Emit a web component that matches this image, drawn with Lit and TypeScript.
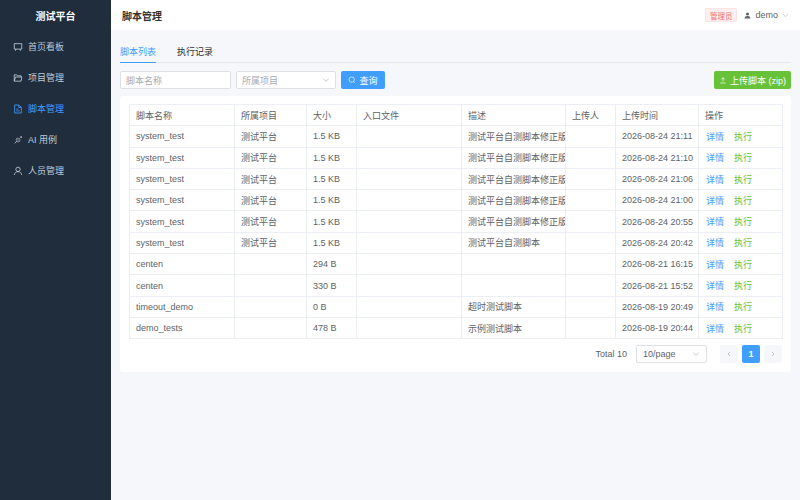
import { LitElement, css, html, svg } from 'lit'
import { customElement } from 'lit/decorators.js'

const navItems = [
	{ label: '首页看板', icon: svg`<path d="M1.5 2h9v6.5h-9z M3.5 8.5 3 10.5M8.5 8.5 9 10.5"/>` },
	{ label: '项目管理', icon: svg`<path d="M1.5 9.8V2.2h3l1 1.2h4.2v1.4M1.5 9.8h8.2l.9-5H3z"/>` },
	{ label: '脚本管理', active: true, icon: svg`<path d="M2 1.2h5l3 3v6.6H2zM7 1.2v3h3M4 6.2h2.5M4 8.3h4"/>` },
	{ label: 'AI 用例', icon: svg`<path d="M6 3.2v2M6 7v2M3.2 6h2M7 6h2M4 4l1 1M7 7l1 1M8 4 7 5M5 7l-3 3M9.8 1.5v2M8.8 2.5h2"/>` },
	{ label: '人员管理', icon: svg`<circle cx="6" cy="4" r="2.6"/><path d="M1.5 10.8c.3-2.6 2.2-4 4.5-4s4.2 1.4 4.5 4"/>` },
]

const rows = [
	['system_test', '测试平台', '1.5 KB', '', '测试平台自测脚本修正版5', '', '2026-08-24 21:11'],
	['system_test', '测试平台', '1.5 KB', '', '测试平台自测脚本修正版4', '', '2026-08-24 21:10'],
	['system_test', '测试平台', '1.5 KB', '', '测试平台自测脚本修正版3', '', '2026-08-24 21:06'],
	['system_test', '测试平台', '1.5 KB', '', '测试平台自测脚本修正版2', '', '2026-08-24 21:00'],
	['system_test', '测试平台', '1.5 KB', '', '测试平台自测脚本修正版', '', '2026-08-24 20:55'],
	['system_test', '测试平台', '1.5 KB', '', '测试平台自测脚本', '', '2026-08-24 20:42'],
	['centen', '', '294 B', '', '', '', '2026-08-21 16:15'],
	['centen', '', '330 B', '', '', '', '2026-08-21 15:52'],
	['timeout_demo', '', '0 B', '', '超时测试脚本', '', '2026-08-19 20:49'],
	['demo_tests', '', '478 B', '', '示例测试脚本', '', '2026-08-19 20:44'],
]

const headers = ['脚本名称', '所属项目', '大小', '入口文件', '描述', '上传人', '上传时间', '操作']

const chevron = svg`<path d="M2 4l4 4 4-4"/>`

@customElement('app-root')
export class AppRoot extends LitElement {
	render() {
		return html`
		<div class="layout">
			<aside class="sidebar">
				<div class="logo">测试平台</div>
				${navItems.map(n => html`
					<div class="nav-item ${n.active ? 'active' : ''}">
						<svg class="nav-icon" viewBox="0 0 12 12">${n.icon}</svg>
						<span>${n.label}</span>
					</div>
				`)}
			</aside>
			<div class="content">
				<header class="topbar">
					<div class="title">脚本管理</div>
					<div class="top-right">
						<span class="role">管理员</span>
						<svg class="user-icon" viewBox="0 0 12 12"><circle cx="6" cy="3.4" r="2.6"/><path d="M1 11c0-3 2-4.3 5-4.3s5 1.3 5 4.3z"/></svg>
						<span class="user">demo</span>
						<svg class="chev small" viewBox="0 0 12 12">${chevron}</svg>
					</div>
				</header>
				<main class="main">
					<div class="tabs">
						<div class="tab active">脚本列表</div>
						<div class="tab">执行记录</div>
					</div>
					<div class="filters">
						<div class="input name">脚本名称</div>
						<div class="input project">所属项目<svg class="chev" viewBox="0 0 12 12">${chevron}</svg></div>
						<button class="btn query">
							<svg viewBox="0 0 12 12"><circle cx="5.6" cy="5.4" r="4"/><path d="M8.6 8.4l2 2"/></svg>查询
						</button>
						<button class="btn upload">
							<svg viewBox="0 0 12 12"><path d="M2 10.5h8M6 8V2.5M3.5 5 6 2.5 8.5 5"/></svg>上传脚本 (zip)
						</button>
					</div>
					<section class="card">
						<table>
							<colgroup>
								<col style="width:105px"><col style="width:72px"><col style="width:50px"><col style="width:105px">
								<col style="width:104px"><col style="width:50px"><col style="width:83px"><col style="width:84px">
							</colgroup>
							<thead><tr>${headers.map(h => html`<th>${h}</th>`)}</tr></thead>
							<tbody>
								${rows.map(r => html`<tr>
									${r.map(c => html`<td>${c}</td>`)}
									<td class="ops"><a class="detail">详情</a><a class="run">执行</a></td>
								</tr>`)}
							</tbody>
						</table>
						<div class="pager">
							<span class="total">Total 10</span>
							<div class="input size">10/page<svg class="chev" viewBox="0 0 12 12">${chevron}</svg></div>
							<div class="page-btn"><svg viewBox="0 0 12 12"><path d="M7.5 3 4.5 6l3 3"/></svg></div>
							<div class="page-btn current">1</div>
							<div class="page-btn"><svg viewBox="0 0 12 12"><path d="M4.5 3l3 3-3 3"/></svg></div>
						</div>
					</section>
				</main>
			</div>
		</div>
	`
	}

	static styles = css`
	:host {
		display: block;
		width: 800px;
		height: 500px;
		overflow: hidden;
		font-family: "Liberation Sans", "Noto Sans CJK SC", sans-serif;
		font-size: 9px;
		color: #606266;
	}

	.layout {
		display: flex;
		height: 500px;
	}

	.sidebar {
		width: 111px;
		flex: none;
		background: #1f2d3d;
		color: #bfcbd9;
	}

	.logo {
		height: 31px;
		display: flex;
		align-items: center;
		justify-content: center;
		color: #fff;
		font-size: 10px;
		font-weight: 700;
	}

	.nav-item {
		height: 31px;
		display: flex;
		align-items: center;
		gap: 5px;
		padding-left: 13px;
		font-size: 9px;
	}

	.nav-item.active {
		color: #409eff;
	}

	.nav-icon {
		width: 10px;
		height: 10px;
		fill: none;
		stroke: currentColor;
		stroke-width: 1;
	}

	.content {
		flex: 1;
		min-width: 0;
		display: flex;
		flex-direction: column;
		background: #f5f7fa;
	}

	.topbar {
		height: 30px;
		flex: none;
		background: #fff;
		display: flex;
		align-items: center;
		justify-content: space-between;
		padding: 0 11px;
	}

	.title {
		font-size: 10px;
		font-weight: 700;
		color: #303133;
	}

	.top-right {
		display: flex;
		align-items: center;
	}

	.role {
		height: 12px;
		padding: 0 4px;
		display: flex;
		align-items: center;
		font-size: 7.5px;
		color: #f56c6c;
		background: #fef0f0;
		border: 1px solid #fde2e2;
		border-radius: 2px;
		margin-right: 7px;
	}

	.user-icon {
		width: 7px;
		height: 7px;
		fill: #606266;
		margin-right: 4px;
	}

	.user {
		color: #606266;
		margin-right: 4px;
	}

	.chev {
		width: 8px;
		height: 8px;
		fill: none;
		stroke: #a8abb2;
		stroke-width: 1;
	}

	.chev.small {
		width: 7px;
		height: 7px;
	}

	.main {
		padding: 15px 9px 0;
	}

	.tabs {
		display: flex;
		gap: 21px;
		height: 17px;
		border-bottom: 1px solid #e4e7ed;
	}

	.tab {
		height: 17px;
		line-height: 14px;
		color: #303133;
	}

	.tab.active {
		color: #409eff;
		border-bottom: 1px solid #409eff;
	}

	.filters {
		display: flex;
		align-items: center;
		gap: 5px;
		margin-top: 8px;
	}

	.input {
		box-sizing: border-box;
		height: 18px;
		background: #fff;
		border: 1px solid #dcdfe6;
		border-radius: 2px;
		display: flex;
		align-items: center;
		justify-content: space-between;
		padding: 0 5px;
		color: #a8abb2;
	}

	.input.name {
		width: 111px;
	}

	.input.project {
		width: 100px;
	}

	.btn {
		height: 18px;
		border: none;
		border-radius: 2px;
		color: #fff;
		font: inherit;
		display: flex;
		align-items: center;
		justify-content: center;
		gap: 3px;
		padding: 0;
	}

	.btn svg {
		width: 8px;
		height: 8px;
		fill: none;
		stroke: #fff;
		stroke-width: 1;
	}

	.btn.query {
		width: 44px;
		background: #409eff;
	}

	.btn.upload {
		width: 77px;
		margin-left: auto;
		background: #67c23a;
	}

	.card {
		margin-top: 7px;
		height: 276px;
		box-sizing: border-box;
		background: #fff;
		border-radius: 3px;
		padding: 8px 9px;
	}

	table {
		width: 653px;
		table-layout: fixed;
		border-collapse: collapse;
	}

	th, td {
		border: 1px solid #ebeef5;
		height: 21.3px;
		padding: 0 6px;
		font-weight: 400;
		text-align: left;
		box-sizing: border-box;
		white-space: nowrap;
		overflow: hidden;
	}

	th {
		color: #606266;
	}

	.ops a {
		margin-right: 9px;
		margin-left: 1px;
	}

	.detail {
		color: #409eff;
	}

	.run {
		color: #67c23a;
	}

	.pager {
		display: flex;
		align-items: center;
		justify-content: flex-end;
		margin-top: 6px;
		height: 18px;
	}

	.total {
		margin-right: 9px;
	}

	.input.size {
		width: 71px;
		color: #606266;
		padding: 0 6px;
		margin-right: 9px;
	}

	.page-btn {
		width: 18px;
		height: 18px;
		margin-left: 4px;
		background: #f5f7fa;
		border-radius: 2px;
		display: flex;
		align-items: center;
		justify-content: center;
		color: #a8abb2;
	}

	.page-btn svg {
		width: 8px;
		height: 8px;
		fill: none;
		stroke: currentColor;
		stroke-width: 1;
	}

	.page-btn.current {
		background: #409eff;
		color: #fff;
		font-weight: 700;
	}
	`
}

declare global {
	interface HTMLElementTagNameMap {
		'app-root': AppRoot
	}
}
